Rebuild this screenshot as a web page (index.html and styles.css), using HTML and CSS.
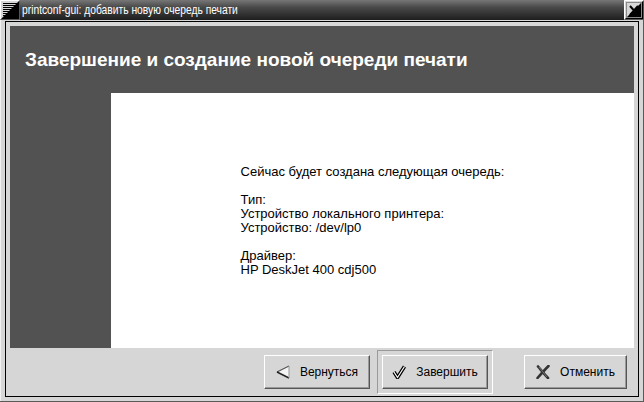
FILE: index.html
```html
<!DOCTYPE html>
<html>
<head>
    <meta charset="utf-8">
    <title>printconf-gui</title>
    <link rel="stylesheet" href="styles.css">
</head>
<body>
    <div class="win">
        <div class="titlebar">
            <div class="menu-box">
                <svg width="20" height="20" viewBox="0 0 20 20">
                    <rect x="0" y="0" width="20" height="20" fill="#d6d6d6"/>
                    <path d="M0.5 0.5H19.5M0.5 0.5V19.5" stroke="#fff"/>
                    <path d="M19.5 0.5V19.5H0.5" stroke="#555"/>
                    <path d="M3 3.5H17M3 5.5H17M3 7.5H17M3 9.5H17M3 11.5H17M3 13.5H17M3 15.5H17M3 17.5H17" stroke="#000"/>
                </svg>
            </div>
            <div class="title"><span>printconf-gui: добавить новую очередь печати</span></div>
            <div class="close-box">
                <svg width="20" height="20" viewBox="0 0 20 20">
                    <rect x="0" y="0" width="20" height="20" fill="#d6d6d6"/>
                    <path d="M0.5 0.5H19.5M0.5 0.5V19.5" stroke="#fff"/>
                    <path d="M19.5 0.5V19.5H0.5" stroke="#555"/>
                    <rect x="2.5" y="2.5" width="15" height="15" fill="none" stroke="#888"/>
                    <path d="M6 6L14 15M14 6L6 15" stroke="#000" stroke-width="2"/>
                </svg>
            </div>
        </div>

        <div class="frame">
            <div class="dialog">
                <div class="druid">
                    <div class="druid-head">Завершение и создание новой очереди печати</div>
                    <div class="druid-body">
                        <div class="side"></div>
                        <div class="page">
                            <div class="summary">Сейчас будет создана следующая очередь:

Тип:
Устройство локального принтера:
Устройство: /dev/lp0

Драйвер:
HP DeskJet 400 cdj500</div>
                        </div>
                    </div>
                </div>

                <div class="actions">
                    <button class="btn back">
                        <svg width="14" height="14" viewBox="0 0 14 14">
                            <path d="M1 7L13 1V13Z" fill="#f4f4f4"/>
                            <path d="M13 1L1 7" stroke="#555" stroke-width="1.2" fill="none"/>
                            <path d="M1 7L13 13" stroke="#222" stroke-width="1.4" fill="none"/>
                            <path d="M13 1V13" stroke="#999" fill="none"/>
                        </svg>
                        <span>Вернуться</span>
                    </button>
                    <div class="default-frame">
                        <button class="btn finish">
                            <svg width="14" height="14" viewBox="0 0 14 14">
                                <path d="M2 7L5.5 12.5L12.5 1.5" stroke="#000" stroke-width="3.6" fill="none" stroke-linejoin="round"/>
                                <path d="M2 7L5.5 12.5L12.5 1.5" stroke="#fff" stroke-width="1.2" fill="none"/>
                            </svg>
                            <span>Завершить</span>
                        </button>
                    </div>
                    <button class="btn cancel">
                        <svg width="14" height="14" viewBox="0 0 14 14">
                            <path d="M2 1.5C5 5 8 9 12 13" stroke="#333" stroke-width="2.6" fill="none" stroke-linecap="round"/>
                            <path d="M12.5 1C9 4.5 5 9 1.5 13" stroke="#333" stroke-width="2.6" fill="none" stroke-linecap="round"/>
                            <path d="M3 2C5.5 5 8 8.5 11 12" stroke="#888" stroke-width="0.8" fill="none"/>
                        </svg>
                        <span>Отменить</span>
                    </button>
                </div>
            </div>
        </div>
    </div>
</body>
</html>
```

FILE: styles.css
```css
body {
    margin: 0;
    font-family: "Liberation Sans", Arial, sans-serif;
    font-size: 12px;
    color: #000;
    background: #d6d6d6;
}

.win {
    width: 644px;
    height: 402px;
    display: flex;
    flex-direction: column;
    overflow: hidden;
}

/* window manager decoration */
.titlebar {
    height: 20px;
    display: flex;
    background: linear-gradient(to bottom, #777 0%, #4a4a4a 35%, #1e1e1e 100%);
}

.menu-box,
.close-box {
    width: 20px;
    height: 20px;
}

.menu-box svg,
.close-box svg {
    display: block;
}

.title {
    flex: 1;
    padding-left: 2px;
    color: #fff;
    font-family: "Liberation Sans", Arial, sans-serif;
    font-size: 13px;
    line-height: 20px;
    white-space: nowrap;
    overflow: hidden;
}

/* the WM font is a narrow one */
.title span {
    display: inline-block;
    transform: scaleX(0.79);
    transform-origin: left center;
}

.frame {
    flex: 1;
    display: flex;
    padding: 1px 5px 5px 5px;
    box-shadow: inset -1px -1px #5a5a5a, inset 1px 0 #f0f0f0;
}

.dialog {
    flex: 1;
    display: flex;
    flex-direction: column;
    border: 1px solid #000;
    background: #d6d6d6;
}

/* druid page */
.druid {
    padding: 4px 4px 0 4px;
    display: flex;
    flex-direction: column;
}

.druid-head {
    height: 67px;
    background: #525252;
    color: #fff;
    font-weight: bold;
    font-size: 19px;
    line-height: 67px;
    padding-left: 15px;
}

.druid-body {
    height: 255px;
    display: flex;
}

.side {
    width: 101px;
    background: #525252;
}

.page {
    flex: 1;
    background: #fff;
    display: flex;
    justify-content: center;
    align-items: center;
}

.summary {
    white-space: pre-line;
    font-size: 13px;
    line-height: 14px;
}

/* button row */
.actions {
    flex: 1;
    display: flex;
    align-items: center;
    padding: 0 10px 0 258px;
}

.btn {
    height: 34px;
    display: flex;
    align-items: center;
    justify-content: center;
    gap: 10px;
    padding: 0;
    font-family: "Liberation Sans", Arial, sans-serif;
    font-size: 12px;
    color: #000;
    background: #d6d6d6;
    border: 1px solid;
    border-color: #fff #555 #555 #fff;
    box-shadow: inset -1px -1px #9a9a9a;
}

.btn svg {
    display: block;
}

.back {
    width: 106px;
    margin-right: 7px;
}

.default-frame {
    padding: 4px;
    border: 1px solid;
    border-color: #9a9a9a #fff #fff #9a9a9a;
}

.finish {
    width: 106px;
}

.cancel {
    width: 103px;
    margin-left: 31px;
}
```
